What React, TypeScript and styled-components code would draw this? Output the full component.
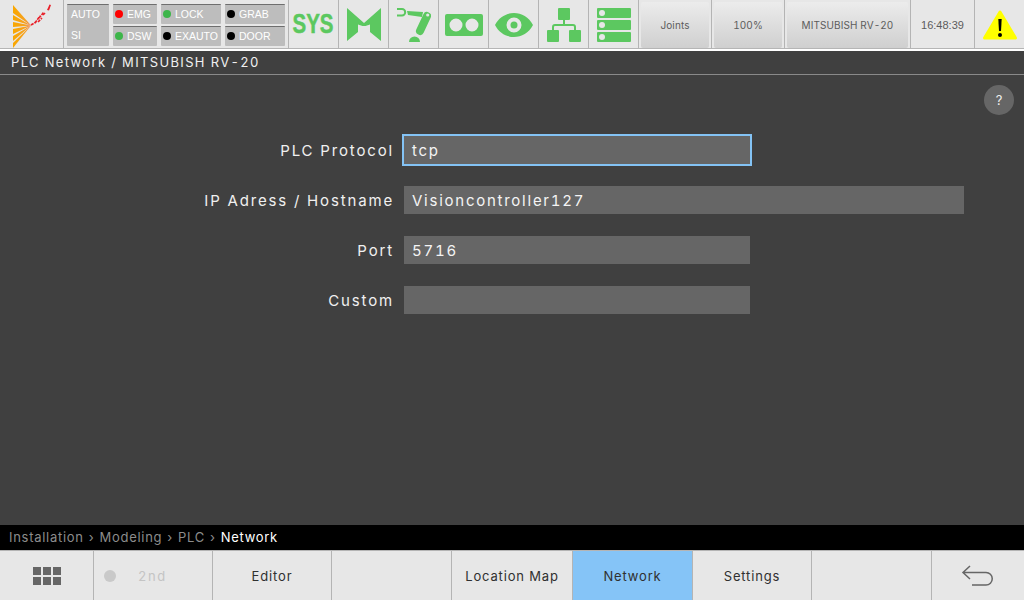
import React from 'react';
import styled, { createGlobalStyle } from 'styled-components';

const GlobalStyle = createGlobalStyle`
  html, body {
    margin: 0;
    padding: 0;
    background: #404040;
  }
  body {
    font-family: 'Inter', 'Liberation Sans', sans-serif;
    font-variant-numeric: tabular-nums;
  }
`;

const Screen = styled.div`
  width: 1024px;
  height: 600px;
  display: flex;
  flex-direction: column;
  overflow: hidden;
  background: #404040;
`;

const TopBar = styled.div`
  height: 49px;
  display: flex;
  flex-shrink: 0;
  background: #e7e7e7;
  border-bottom: 2px solid #fff;
  box-shadow: 0 -1px 0 #b5b5b5 inset;
`;

const TopCell = styled.div<{ $w: number }>`
  width: ${(p) => p.$w}px;
  flex-shrink: 0;
  box-sizing: border-box;
  border-right: 1px solid #b4b4b4;
  display: flex;
  align-items: center;
  justify-content: center;
  font-family: 'Liberation Sans', sans-serif;
  font-size: 11px;
  color: #5c5c5c;
`;

const StatusPanel = styled.div`
  width: 225px;
  flex-shrink: 0;
  box-sizing: border-box;
  padding: 4px 3px 0 3px;
  border-right: 1px solid #b4b4b4;
  display: flex;
  gap: 4px;
`;

const StatusColumn = styled.div<{ $w: number }>`
  width: ${(p) => p.$w}px;
  display: flex;
  flex-direction: column;
  gap: 2px;
`;

const StatusChip = styled.div<{ $tall?: boolean }>`
  height: ${(p) => (p.$tall ? 42 : 20)}px;
  box-sizing: border-box;
  background: #bdbdbd;
  border-top: 1px solid #6e6e6e;
  border-radius: 1px;
  padding: 0 0 2px ${(p) => (p.$tall ? 4 : 2)}px;
  display: flex;
  flex-direction: ${(p) => (p.$tall ? 'column' : 'row')};
  align-items: ${(p) => (p.$tall ? 'flex-start' : 'center')};
  justify-content: ${(p) => (p.$tall ? 'space-around' : 'flex-start')};
  gap: 4px;
  font-family: 'Liberation Sans', sans-serif;
  font-size: 10.5px;
  color: #fff;
`;

const Led = styled.span<{ $color: string }>`
  width: 8px;
  height: 8px;
  border-radius: 50%;
  background: ${(p) => p.$color};
  flex-shrink: 0;
`;

const SysLabel = styled.span`
  font-family: 'Liberation Sans', sans-serif;
  font-size: 27px;
  font-weight: 700;
  color: #5bc85f;
  transform: scaleX(0.76);
  -webkit-text-stroke: 0.5px #5bc85f;
`;

const SoftButton = styled.div`
  width: calc(100% - 4px);
  height: 46px;
  margin-top: 1px;
  border-radius: 2px;
  background: linear-gradient(#ececec, #cfcfcf);
  display: flex;
  align-items: center;
  justify-content: center;
  font-family: 'Inter', 'Liberation Sans', sans-serif;
  font-size: 10px;
  letter-spacing: 0.1px;
  color: #5c5c5c;
`;

const TitleBar = styled.div`
  height: 24px;
  flex-shrink: 0;
  box-sizing: border-box;
  padding: 0 0 2px 11px;
  border-bottom: 1px solid #8a8a8a;
  display: flex;
  align-items: center;
  font-size: 13px;
  letter-spacing: 1.35px;
  color: #f0f0f0;
`;

const Main = styled.div`
  flex: 1;
  position: relative;
  box-sizing: border-box;
  padding-top: 61px;
`;

const HelpButton = styled.div`
  position: absolute;
  top: 10px;
  right: 10px;
  width: 30px;
  height: 30px;
  border-radius: 50%;
  background: #666;
  color: #eee;
  font-size: 13px;
  display: flex;
  align-items: center;
  justify-content: center;
`;

const Form = styled.div`
  display: grid;
  grid-template-columns: 393px 1fr;
  column-gap: 11px;
  row-gap: 22px;
  align-items: center;
`;

const Label = styled.div`
  text-align: right;
  font-size: 15px;
  letter-spacing: 1.85px;
  margin-right: -1px;
  color: #f0f0f0;
`;

const Field = styled.div<{ $wide?: boolean; $focused?: boolean }>`
  width: ${(p) => (p.$wide ? 560 : 346)}px;
  height: 28px;
  box-sizing: border-box;
  padding-left: 8px;
  background: #666;
  display: flex;
  align-items: center;
  font-size: 15px;
  letter-spacing: 1.75px;
  color: #f4f4f4;
  outline: ${(p) => (p.$focused ? '2px solid #84c3f5' : 'none')};
  outline-offset: 0;
`;

const Breadcrumb = styled.div`
  height: 25px;
  flex-shrink: 0;
  box-sizing: border-box;
  padding: 0 0 2px 9px;
  background: #000;
  display: flex;
  align-items: center;
  gap: 5px;
  font-size: 13px;
  letter-spacing: 0.72px;
  color: #8c8c8c;
`;

const CrumbCurrent = styled.span`
  color: #fff;
`;

const BottomBar = styled.div`
  height: 50px;
  flex-shrink: 0;
  display: flex;
  background: #e7e7e7;
  border-top: 1px solid #b4b4b4;
  box-sizing: border-box;
`;

const BottomCell = styled.div<{ $w: number; $active?: boolean; $muted?: boolean }>`
  width: ${(p) => p.$w}px;
  flex-shrink: 0;
  box-sizing: border-box;
  border-right: 1px solid #b4b4b4;
  display: flex;
  align-items: center;
  justify-content: center;
  font-size: 13px;
  letter-spacing: 0.85px;
  color: ${(p) => (p.$muted ? '#c4c4c4' : '#303030')};
  background: ${(p) => (p.$active ? '#85c4f7' : 'transparent')};
`;

const GridIcon = styled.div`
  display: grid;
  grid-template-columns: repeat(3, 8px);
  grid-template-rows: repeat(2, 8px);
  gap: 2px;
  & > span {
    background: #666;
  }
`;

const SecondGroup = styled.div`
  width: 100%;
  box-sizing: border-box;
  padding-left: 10px;
  display: flex;
  align-items: center;
  gap: 22px;
  letter-spacing: 1.6px;
`;

const SecondLed = styled.span`
  width: 12px;
  height: 12px;
  border-radius: 50%;
  background: #c9c9c9;
`;

const GREEN = '#5cc860';

const fanRays = [
  [4, 12],
  [14, 19],
  [21, 26],
  [28, 33],
  [35, 40],
  [42, 47],
];

const splash = [
  [31, 24, 36, 21],
  [35, 22, 40, 15],
  [38, 21, 42, 17],
  [39, 17, 44, 11],
  [43, 14, 45, 12],
];

const Logo = () => (
  <svg width="42" height="48" viewBox="11 0 42 48">
    <defs>
      <linearGradient id="fan" x1="0" x2="1" y1="0" y2="0">
        <stop offset="0" stopColor="#f9a800" />
        <stop offset="0.7" stopColor="#f6a020" />
        <stop offset="1" stopColor="#ee6a30" />
      </linearGradient>
    </defs>
    {fanRays.map(([a, b]) => (
      <path key={a} d={`M13 ${a} L31 24.5 L13 ${b} Z`} fill="url(#fan)" />
    ))}
    {splash.map(([x1, y1, x2, y2]) => (
      <line
        key={x1 * y1}
        x1={x1}
        y1={y1}
        x2={x2}
        y2={y2}
        stroke="#e8202a"
        strokeWidth="1.6"
        strokeDasharray="3 1"
      />
    ))}
    <path d="M47 9 L49.5 3.5 L51 4 L49 9.5 Z" fill="#e8202a" />
  </svg>
);

const MIcon = () => (
  <svg width="34" height="34" viewBox="0 0 34 34">
    <path
      fill={GREEN}
      d="M0 0 L17 15 L34 0 V33 L23 24 V16.5 L18.5 18 H15.5 L11 16.5 V24 L0 33 Z"
    />
  </svg>
);

const RobotIcon = () => (
  <svg width="34" height="34" viewBox="0 0 34 34" fill="none">
    <path d="M0 1 H5 A3.2 3.2 0 0 1 5 7.4 H0" stroke={GREEN} strokeWidth="2" />
    <path d="M10 3 L26 4 L25 9 L11 7 Z" fill={GREEN} />
    <path d="M30 8 L23 23" stroke={GREEN} strokeWidth="8" strokeLinecap="round" />
    <circle cx="30.7" cy="7" r="1.6" fill="#e7e7e7" />
    <path d="M12 34 A5.5 5.5 0 0 1 23 34 Z" fill={GREEN} />
  </svg>
);

const VisionIcon = () => (
  <svg width="38" height="22" viewBox="0 0 38 22">
    <path
      fill={GREEN}
      fillRule="evenodd"
      d="M2 0 H36 A2 2 0 0 1 38 2 V20 A2 2 0 0 1 36 22 H2 A2 2 0 0 1 0 20 V2 A2 2 0 0 1 2 0 Z M11 4.5 A6.5 6.5 0 1 0 11 17.5 A6.5 6.5 0 1 0 11 4.5 Z M27 4.5 A6.5 6.5 0 1 0 27 17.5 A6.5 6.5 0 1 0 27 4.5 Z"
    />
  </svg>
);

const EyeIcon = () => (
  <svg width="38" height="24" viewBox="0 0 38 24">
    <path
      fill={GREEN}
      fillRule="evenodd"
      d="M0 12 C8 -4 30 -4 38 12 C30 28 8 28 0 12 Z M19 4.5 A7.5 7.5 0 1 0 19 19.5 A7.5 7.5 0 1 0 19 4.5 Z"
    />
    <circle cx="19" cy="12" r="3.5" fill={GREEN} />
  </svg>
);

const TreeIcon = () => (
  <svg width="34" height="34" viewBox="0 0 34 34">
    <rect x="11" y="0" width="12" height="12" rx="1" fill={GREEN} />
    <rect x="0" y="22" width="12" height="12" rx="1" fill={GREEN} />
    <rect x="22" y="22" width="12" height="12" rx="1" fill={GREEN} />
    <path
      d="M17 12 V17 M6 22 V19 A2 2 0 0 1 8 17 H26 A2 2 0 0 1 28 19 V22"
      stroke={GREEN}
      strokeWidth="2"
      fill="none"
    />
  </svg>
);

const RackIcon = () => (
  <svg width="34" height="34" viewBox="0 0 34 34">
    {[0, 12, 24].map((y) => (
      <g key={y}>
        <rect x="0" y={y} width="34" height="10" rx="1" fill={GREEN} />
        <circle cx="5" cy={y + 5} r="3" fill="#e7e7e7" />
      </g>
    ))}
  </svg>
);

const WarningIcon = () => (
  <svg width="36" height="32" viewBox="0 0 36 32">
    <path
      d="M18 3 L33.5 29 H2.5 Z"
      fill="#ffff00"
      stroke="#ffff00"
      strokeWidth="3"
      strokeLinejoin="round"
    />
    <path d="M16.3 10 H19.7 L19 22 H17 Z" fill="#000" />
    <circle cx="18" cy="26" r="2" fill="#000" />
  </svg>
);

const BackIcon = () => (
  <svg width="34" height="24" viewBox="0 0 34 24" fill="none">
    <path
      d="M9 2 L2 8.5 L9 15 M2 8.5 H25 A6.2 6.2 0 0 1 25 21 H11"
      stroke="#666"
      strokeWidth="1.5"
    />
  </svg>
);

const statusColumns = [
  { w: 44, items: [['EMG', '#ff0000'], ['DSW', '#3db54a']] },
  { w: 60, items: [['LOCK', '#3db54a'], ['EXAUTO', '#000']] },
  { w: 60, items: [['GRAB', '#000'], ['DOOR', '#000']] },
];

const App = () => {
  return (
    <Screen>
      <GlobalStyle />
      <TopBar>
        <TopCell $w={64}>
          <Logo />
        </TopCell>
        <StatusPanel>
          <StatusColumn $w={42}>
            <StatusChip $tall>
              <span>AUTO</span>
              <span>SI</span>
            </StatusChip>
          </StatusColumn>
          {statusColumns.map((col) => (
            <StatusColumn key={col.items[0][0]} $w={col.w}>
              {col.items.map(([name, color]) => (
                <StatusChip key={name}>
                  <Led $color={color} />
                  {name}
                </StatusChip>
              ))}
            </StatusColumn>
          ))}
        </StatusPanel>
        <TopCell $w={50}>
          <SysLabel>SYS</SysLabel>
        </TopCell>
        <TopCell $w={50}>
          <MIcon />
        </TopCell>
        <TopCell $w={50}>
          <RobotIcon />
        </TopCell>
        <TopCell $w={50}>
          <VisionIcon />
        </TopCell>
        <TopCell $w={50}>
          <EyeIcon />
        </TopCell>
        <TopCell $w={50}>
          <TreeIcon />
        </TopCell>
        <TopCell $w={50}>
          <RackIcon />
        </TopCell>
        <TopCell $w={73}>
          <SoftButton>Joints</SoftButton>
        </TopCell>
        <TopCell $w={73}>
          <SoftButton>100%</SoftButton>
        </TopCell>
        <TopCell $w={126}>
          <SoftButton>MITSUBISH RV-20</SoftButton>
        </TopCell>
        <TopCell $w={64}>16:48:39</TopCell>
        <TopCell $w={50}>
          <WarningIcon />
        </TopCell>
      </TopBar>
      <TitleBar>PLC Network / MITSUBISH RV-20</TitleBar>
      <Main>
        <HelpButton>?</HelpButton>
        <Form>
          <Label>PLC Protocol</Label>
          <Field $focused>tcp</Field>
          <Label>IP Adress / Hostname</Label>
          <Field $wide>Visioncontroller127</Field>
          <Label>Port</Label>
          <Field>5716</Field>
          <Label>Custom</Label>
          <Field />
        </Form>
      </Main>
      <Breadcrumb>
        <span>Installation</span>›<span>Modeling</span>›<span>PLC</span>›
        <CrumbCurrent>Network</CrumbCurrent>
      </Breadcrumb>
      <BottomBar>
        <BottomCell $w={94}>
          <GridIcon>
            {Array.from({ length: 6 }, (_, i) => (
              <span key={i} />
            ))}
          </GridIcon>
        </BottomCell>
        <BottomCell $w={119} $muted>
          <SecondGroup>
            <SecondLed />
            2nd
          </SecondGroup>
        </BottomCell>
        <BottomCell $w={119}>Editor</BottomCell>
        <BottomCell $w={120} />
        <BottomCell $w={121}>Location Map</BottomCell>
        <BottomCell $w={120} $active>
          Network
        </BottomCell>
        <BottomCell $w={119}>Settings</BottomCell>
        <BottomCell $w={120} />
        <BottomCell $w={93}>
          <BackIcon />
        </BottomCell>
      </BottomBar>
    </Screen>
  );
};

export default App;
